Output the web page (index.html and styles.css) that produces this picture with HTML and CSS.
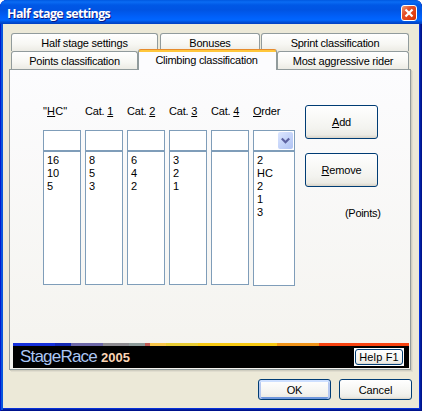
FILE: index.html
```html
<!DOCTYPE html>
<html lang="en">
<head>
<meta charset="utf-8">
<title>Half stage settings</title>
<link rel="stylesheet" href="styles.css">
</head>
<body>
<div class="window">
  <header class="titlebar">
    <h1>Half stage settings</h1>
    <button class="close" aria-label="Close"><svg width="16" height="16" viewBox="0 0 16 16"><path d="M4.5 4.5l7 7M11.5 4.5l-7 7" stroke="#fff" stroke-width="2.2"/></svg></button>
  </header>
  <div class="client">
    <nav class="tabs back">
      <button class="tab half"><span>Half stage settings</span></button>
      <button class="tab bonus"><span>Bonuses</span></button>
      <button class="tab sprint"><span>Sprint classification</span></button>
    </nav>
    <nav class="tabs front">
      <button class="tab points"><span>Points classification</span></button>
      <button class="tab active"><span>Climbing classification</span></button>
      <button class="tab rider"><span>Most aggressive rider</span></button>
    </nav>
    <main class="panel">
      <div class="content">
        <div class="columns">
          <section class="col"><label class="hc">"<u>H</u>C"</label><div class="field"></div><ul><li>16</li><li>10</li><li>5</li></ul></section>
          <section class="col"><label>Cat. <u>1</u></label><div class="field"></div><ul><li>8</li><li>5</li><li>3</li></ul></section>
          <section class="col"><label>Cat. <u>2</u></label><div class="field"></div><ul><li>6</li><li>4</li><li>2</li></ul></section>
          <section class="col"><label>Cat. <u>3</u></label><div class="field"></div><ul><li>3</li><li>2</li><li>1</li></ul></section>
          <section class="col"><label>Cat. <u>4</u></label><div class="field"></div><ul></ul></section>
          <section class="col order"><label><u>O</u>rder</label><div class="field"><span class="drop"><svg width="15" height="17" viewBox="0 0 15 17"><path d="M3.8 6.5l3.7 3.7 3.7-3.7" fill="none" stroke="#5c62a0" stroke-width="2.2"/></svg></span></div><ul><li>2</li><li>HC</li><li>2</li><li>1</li><li>3</li></ul></section>
        </div>
        <aside class="actions">
          <button class="btn"><span><u>A</u>dd</span></button>
          <button class="btn"><span><u>R</u>emove</span></button>
          <p>(Points)</p>
        </aside>
      </div>
      <footer class="banner">
        <div class="stripe"></div>
        <div class="brand"><span class="name">StageRace</span><span class="year">2005</span><div class="helpbox"><button class="btn help"><span>Help F1</span></button></div></div>
      </footer>
    </main>
    <div class="dialog-buttons">
      <button class="btn ok"><span>OK</span></button>
      <button class="btn"><span>Cancel</span></button>
    </div>
  </div>
</div>
</body>
</html>
```
FILE: styles.css
```css
* { box-sizing: border-box; }
html, body { margin: 0; width: 422px; height: 411px; overflow: hidden; background: #fff; }
body, button { font: 11px/13px "Liberation Sans", Arial, sans-serif; color: #000; }
button { margin: 0; padding: 0; border: 0; white-space: nowrap; }
h1, p, ul { margin: 0; padding: 0; list-style: none; }
u { text-decoration: underline; text-underline-offset: 1px; text-decoration-thickness: 1px; text-decoration-skip-ink: none; }

.window { width: 422px; height: 411px; padding: 0 3px 3px; border-radius: 7px 7px 0 0; background: #0831d9; box-shadow: inset 1px 0 #0019cf, inset -1px -1px #00138c, inset 3px 0 #0855dd, inset -2px -2px #001ea0; }
.titlebar { display: flex; justify-content: space-between; height: 24px; margin: 0 -3px; padding: 5px 5px 0 7px; border-radius: 7px 7px 0 0; background: linear-gradient(#0058e0 0, #0a6cf4 2px, #0058e6 5px, #0054e3 10px, #0060fa 17px, #0066ff 20px, #0050d8 22px, #003dc0 24px); }
h1 { font: bold 12.5px/17px "Open Sans", "Noto Sans", sans-serif; letter-spacing: -.66px; color: #fff; text-shadow: 1px 1px #0a1883; white-space: nowrap; }
.close { width: 16px; height: 16px; border: 1px solid #fff; border-radius: 3px; background: linear-gradient(135deg, #eea078, #e4512b 35%, #e33b0c 80%, #c92f05); }
.close svg { display: block; margin: -1px; }

.client { height: 384px; padding: 9px 8px 0 6px; background: #ece9d8; }
.tabs { display: flex; height: 18px; margin-left: 2px; }
.tab { height: 18px; padding: 2px 0 0; border: 1px solid #919b9c; border-bottom: 0; border-radius: 3px 3px 0 0; background: linear-gradient(#fff, #f7f7f3 60%, #ecebe4); letter-spacing: -.22px; }
.tab span { display: block; }
.half { width: 147px; margin-right: 2px; }
.bonus { width: 100px; margin-right: 1px; }
.sprint { width: 148px; letter-spacing: -.26px; }
.points { width: 127px; letter-spacing: -.26px; }
.tab.active { width: 139px; height: 21px; margin-top: -2px; padding: 0 2px 0 0; position: relative; z-index: 1; border-top: 1px solid #e68b2c; background: linear-gradient(#ffc73c 2px, #fcfcfe 2px); letter-spacing: -.26px; }
.rider { width: 132px; }

.panel { display: flex; flex-direction: column; height: 301px; width: 402px; padding: 0 1px 1px 3px; border: 1px solid #919b9c; background: linear-gradient(#fcfcfe, #f4f3ee); box-shadow: 1px 1px #d0cec0, 2px 2px #e0ddcf; }
.content { display: flex; height: 273px; padding: 35px 0 0 30px; }
.columns { display: flex; gap: 4px; align-items: flex-start; }
.col { width: 38px; }
.col label { display: block; height: 25px; white-space: nowrap; letter-spacing: -.2px; }
.col label.hc { letter-spacing: .15px; }
.field { height: 21px; border: 1px solid #7f9db9; background: #fff; }
.col ul { height: 134px; border: 1px solid #7f9db9; padding: 2px 0 0 3px; background: #fff; }
.order { width: 42px; }
.order .field { display: flex; justify-content: flex-end; padding: 1px; }
.order ul { height: 135px; }
.drop { width: 15px; height: 17px; border-radius: 2px; background: linear-gradient(135deg, #dce6ff, #bccdf7 70%, #b0c3f3); }
.drop svg { display: block; }
.actions { width: 75px; margin-left: 10px; }
.btn { display: block; width: 73px; height: 34px; border: 1px solid #003c74; border-radius: 3px; background: linear-gradient(#fff, #f3f3ef 70%, #ecebe5 90%, #d8d3c8); }
.actions .btn { letter-spacing: -.15px; }
.actions .btn + .btn { margin-top: 14px; }
.actions p { margin: 20px 0 0 40px; letter-spacing: -.3px; white-space: nowrap; }

.banner { width: 396px; height: 25px; background: #000; }
.stripe { height: 3px; background: linear-gradient(90deg, #1530dc 42px, #1429b4 42px 58px, #6d68a8 58px 90px, #8d8b90 90px 116px, #8d9b99 116px 132px, #c15a53 132px 137px, #f8c549 137px 153px, #e8cc33 153px 185px, #f7c912 185px 264px, #f09419 264px 306px, #f74311 306px); }
.brand { display: flex; align-items: flex-start; height: 22px; padding-left: 7px; color: #fff; }
.name { width: 81px; font-size: 17px; line-height: 21px; letter-spacing: -.8px; color: #acc7f4; }
.year { font-size: 13px; line-height: 24px; font-weight: bold; color: #fbd5b5; }
.helpbox { width: 50px; height: 18px; margin: 2px 5px 0 auto; padding: 1px; background: #fff; }
.help { width: 48px; height: 16px; padding-top: 1px; letter-spacing: .15px; }
.dialog-buttons { display: flex; gap: 8px; justify-content: flex-end; margin: 9px -1px 0 0; }
.dialog-buttons .btn { height: 21px; padding-top: 1px; letter-spacing: -.15px; }
.ok { box-shadow: inset 0 2px #cee0ff, inset 2px 0 #b5c8f0, inset -2px 0 #b5c8f0, inset 0 -2px #6e96dc; }
```
